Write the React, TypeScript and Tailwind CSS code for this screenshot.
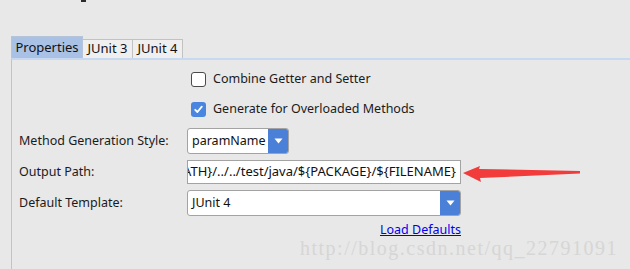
import React from "react";

const font = { fontFamily: '"Noto Sans", "Open Sans", sans-serif' };

function Checkbox({ checked }: { checked?: boolean }) {
  if (checked) {
    return (
      <span className="w-[15px] h-[15px] rounded-[3px] bg-[#4a86df] flex items-center justify-center">
        <svg width="11" height="11" viewBox="0 0 11 11">
          <path d="M2.2 5.8 L4.4 8 L8.8 2.6" fill="none" stroke="#fff" strokeWidth="1.8" strokeLinecap="round" strokeLinejoin="round" />
        </svg>
      </span>
    );
  }
  return <span className="w-[15px] h-[15px] rounded-[3px] border border-[#4a4a4a] bg-white" />;
}

function Caret() {
  return (
    <svg width="9" height="6" viewBox="0 0 9 6">
      <path d="M0.5 0.5 H8.5 L4.5 5.5 Z" fill="#fff" />
    </svg>
  );
}

function Select({ value, width }: { value: string; width: string }) {
  return (
    <div className={`${width} h-[26px] flex border border-[#a3a3a3] rounded-[3px] bg-white overflow-hidden`}>
      <div className="flex-1 flex items-center pl-[4px] text-[12.5px] text-[#111] whitespace-nowrap">{value}</div>
      <div className="w-[21px] -my-px -mr-px bg-[#4a80d8] rounded-r-[3px] flex items-center justify-center">
        <Caret />
      </div>
    </div>
  );
}

function Row({ label, children }: { label: string; children: React.ReactNode }) {
  return (
    <div className="flex items-center">
      <div className="w-[168px] text-[12.5px] text-[#1b1b1b]">{label}</div>
      {children}
    </div>
  );
}

export default function App() {
  return (
    <div className="relative w-[630px] h-[269px] bg-[#e8e8e8] overflow-hidden" style={font}>
      <span className="absolute left-[81px] top-0 w-[5px] h-[2px] bg-[#2a2a2a]" />

      <div className="pt-[36px] pl-[11px]">
        <div className="flex items-end h-[22px]">
          <div className="w-[72px] h-[22px] bg-[#a9c1e4] border-t border-x border-[#b5c4d8] flex items-center justify-center text-[13px] text-[#111]">
            Properties
          </div>
          <div className="w-[50px] h-[19px] bg-[#efefef] border-t border-r border-[#c2c2c2] flex items-center justify-center text-[13px] text-[#111]">
            JUnit 3
          </div>
          <div className="w-[50px] h-[19px] bg-[#efefef] border-t border-r border-[#c2c2c2] flex items-center justify-center text-[13px] text-[#111]">
            JUnit 4
          </div>
        </div>

        <div className="h-[220px] border-t-2 border-t-[#c7d9f0] border-l border-l-[#c3c3c3] pl-[7px] pt-[12px]">
          <div className="flex items-center gap-[7px] h-[15px] pl-[172px]">
            <Checkbox />
            <span className="text-[12.5px] text-[#1b1b1b]">Combine Getter and Setter</span>
          </div>
          <div className="flex items-center gap-[7px] h-[15px] pl-[172px] mt-[15px]">
            <Checkbox checked />
            <span className="text-[12.5px] text-[#1b1b1b]">Generate for Overloaded Methods</span>
          </div>

          <div className="mt-[11px] flex flex-col gap-[6px]">
            <Row label="Method Generation Style:">
              <Select value="paramName" width="w-[102px]" />
            </Row>
            <Row label="Output Path:">
              <div className="w-[274px] h-[24px] border border-[#a3a3a3] bg-white overflow-hidden flex justify-end items-center pr-[4px] text-[13px] text-[#111] whitespace-nowrap">
                <span>{"${SOURCEPATH}/../../test/java/${PACKAGE}/${FILENAME}"}</span>
              </div>
            </Row>
            <Row label="Default Template:">
              <Select value="JUnit 4" width="w-[274px]" />
            </Row>
            <div className="flex">
              <div className="w-[442px] flex justify-end">
                <a className="text-[12.5px] leading-[16px] text-[#0000ee] underline">Load Defaults</a>
              </div>
            </div>
          </div>
        </div>
      </div>

      <svg className="absolute left-[460px] top-[160px]" width="125" height="26" viewBox="0 0 125 26">
        <path d="M3 13 L20 6 L19 9 L120 11 L120 13.5 L20 18 L21 22 Z" fill="#f23b3b" />
      </svg>

      <div
        className="absolute left-[300px] top-[237px] text-[20px] leading-[22px] tracking-[1.5px] text-[#d6d6d6] whitespace-nowrap"
        style={{ fontFamily: '"Liberation Serif", serif' }}
      >
        http://blog.csdn.net/qq_22791091
      </div>
    </div>
  );
}
